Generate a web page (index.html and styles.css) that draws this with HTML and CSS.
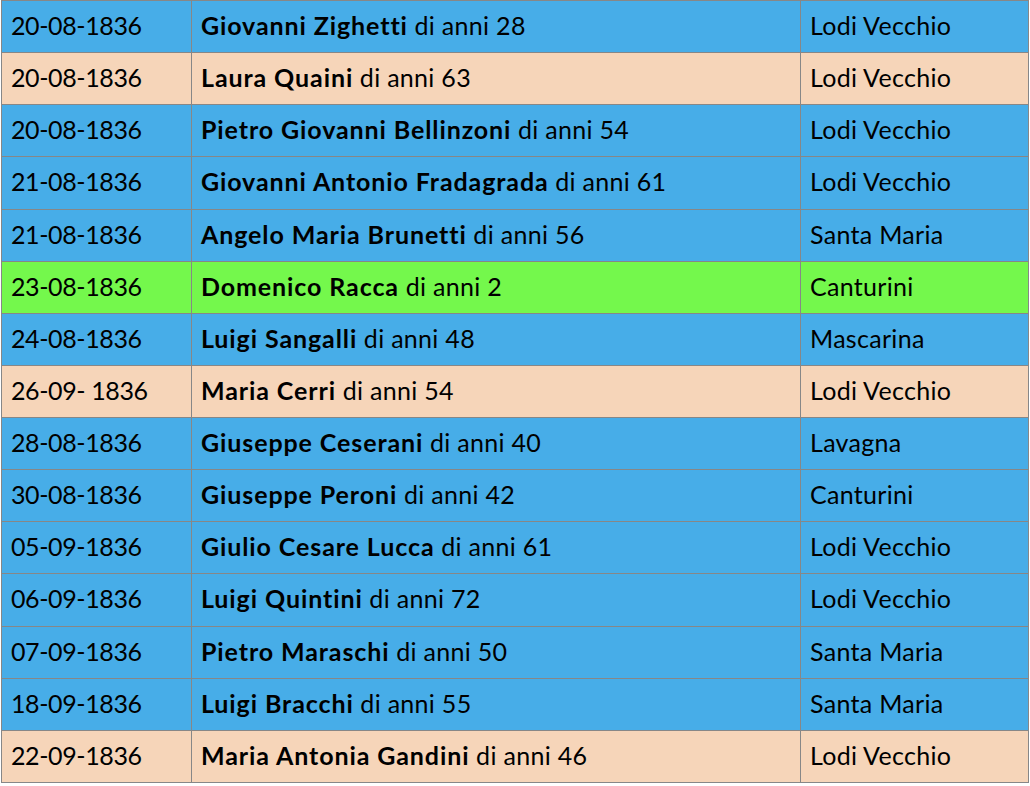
FILE: index.html
```html
<!DOCTYPE html>
<html lang="it">
  <head>
    <meta charset="UTF-8" />
    <title>Registro morti 1836</title>
    <link rel="stylesheet" href="styles.css">
  </head>
  <body>
    <table class="registro">
      <colgroup>
        <col class="col-data" />
        <col class="col-nome" />
        <col class="col-luogo" />
      </colgroup>
      <tr class="blu"><td class="data">20-08-1836</td><td><b>Giovanni Zighetti</b> di anni 28</td><td>Lodi Vecchio</td></tr>
      <tr class="pesca"><td class="data">20-08-1836</td><td><b>Laura Quaini</b> di anni 63</td><td>Lodi Vecchio</td></tr>
      <tr class="blu"><td class="data">20-08-1836</td><td><b>Pietro Giovanni Bellinzoni</b> di anni 54</td><td>Lodi Vecchio</td></tr>
      <tr class="blu"><td class="data">21-08-1836</td><td><b>Giovanni Antonio Fradagrada</b> di anni 61</td><td>Lodi Vecchio</td></tr>
      <tr class="blu"><td class="data">21-08-1836</td><td><b>Angelo Maria Brunetti</b> di anni 56</td><td>Santa Maria</td></tr>
      <tr class="verde"><td class="data">23-08-1836</td><td><b>Domenico Racca</b> di anni 2</td><td>Canturini</td></tr>
      <tr class="blu"><td class="data">24-08-1836</td><td><b>Luigi Sangalli</b> di anni 48</td><td>Mascarina</td></tr>
      <tr class="pesca"><td class="data">26-09- 1836</td><td><b>Maria Cerri</b> di anni 54</td><td>Lodi Vecchio</td></tr>
      <tr class="blu"><td class="data">28-08-1836</td><td><b>Giuseppe Ceserani</b> di anni 40</td><td>Lavagna</td></tr>
      <tr class="blu"><td class="data">30-08-1836</td><td><b>Giuseppe Peroni</b> di anni 42</td><td>Canturini</td></tr>
      <tr class="blu"><td class="data">05-09-1836</td><td><b>Giulio Cesare Lucca</b> di anni 61</td><td>Lodi Vecchio</td></tr>
      <tr class="blu"><td class="data">06-09-1836</td><td><b>Luigi Quintini</b> di anni 72</td><td>Lodi Vecchio</td></tr>
      <tr class="blu"><td class="data">07-09-1836</td><td><b>Pietro Maraschi</b> di anni 50</td><td>Santa Maria</td></tr>
      <tr class="blu"><td class="data">18-09-1836</td><td><b>Luigi Bracchi</b> di anni 55</td><td>Santa Maria</td></tr>
      <tr class="pesca"><td class="data">22-09-1836</td><td><b>Maria Antonia Gandini</b> di anni 46</td><td>Lodi Vecchio</td></tr>
    </table>
  </body>
</html>
```

FILE: styles.css
```css
body {
  margin: 0;
  padding: 0 0 0 1px;
  background: #fff;
  font-family: "Lato", "Open Sans", sans-serif;
  color: #000;
}

.registro {
  border-collapse: collapse;
  table-layout: fixed;
  width: 1027px;
  font-size: 25px;
  font-variant-ligatures: none;
}

.col-data {
  width: 190px;
}

.col-nome {
  width: 609px;
}

.col-luogo {
  width: 228px;
}

.registro td {
  border: 1px solid #878787;
  height: 52.13px;
  padding: 0 9px 3px;
  box-sizing: border-box;
  vertical-align: middle;
  white-space: nowrap;
  letter-spacing: 0.3px;
}

.registro td.data {
  letter-spacing: -0.4px;
}

.registro b {
  font-weight: 700;
  letter-spacing: 0.9px;
}

.blu {
  background: #47ade8;
}

.pesca {
  background: #f6d5b9;
}

.verde {
  background: #74f84c;
}
```
